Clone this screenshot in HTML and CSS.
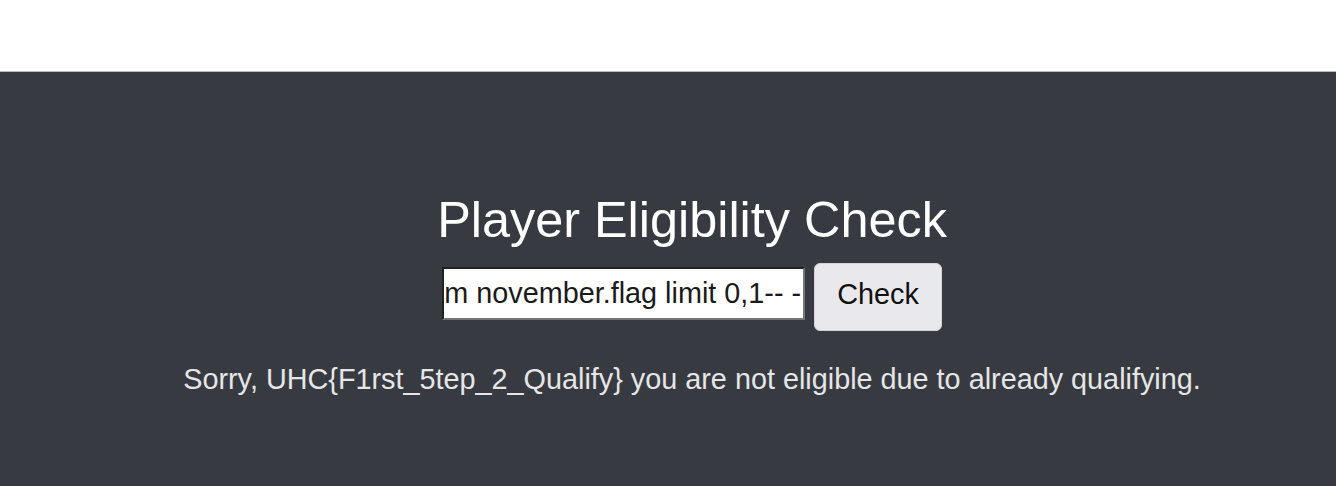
FILE: index.html
```html
<!DOCTYPE html>
<html lang="en">
<head>
    <meta charset="UTF-8">
    <meta name="viewport" content="width=device-width, initial-scale=1.0">
    <title>Player Eligibility Check</title>
    <link rel="stylesheet" href="styles.css">
</head>
<body>
    <div class="topbar"></div>

    <div class="main">
        <h1 class="title">Player Eligibility Check</h1>

        <form class="checkForm" onsubmit="return false;">
            <input type="text" id="player" class="playerInput" value="' union select flag from november.flag limit 0,1-- -">
            <button type="submit" class="checkBtn">Check</button>
        </form>

        <p class="message">Sorry, UHC{F1rst_5tep_2_Qualify} you are not eligible due to already qualifying.</p>
    </div>

    <script>
        // 入力欄を末尾までスクロール
        const input = document.getElementById("player");
        input.scrollLeft = input.scrollWidth;
    </script>
</body>
</html>
```

FILE: styles.css
```css
body {
    font-family: "Liberation Sans", Arial, sans-serif;
    margin: 0;
    padding: 0;
    background-color: #fff;
}
.topbar {
    height: 71px;
    background-color: #fff;
}
.main {
    background-color: #373a41;
    border-top: 1px solid #b8b9bb;
    height: 415px;
    text-align: center;
    color: #fff;
    padding-top: 118px;
    padding-left: 48px;
    box-sizing: border-box;
    font-size: 28.8px;
}
.title {
    font-size: 50.4px;
    font-weight: normal;
    margin: 0 0 14px 0;
}
.checkForm {
    margin: 0;
    display: flex;
    justify-content: center;
    align-items: flex-start;
    gap: 9px;
}
.playerInput {
    font-family: "Liberation Sans", Arial, sans-serif;
    font-size: 28.8px;
    color: #1a1a1a;
    width: 363px;
    height: 53px;
    margin-top: 4px;
    box-sizing: border-box;
    padding: 1px 2px;
    border: 2px inset #767676;
}
.checkBtn {
    font-family: "Liberation Sans", Arial, sans-serif;
    font-size: 28.8px;
    color: #111;
    background-color: #e9e9ed;
    border: 1px solid #d4d4d8;
    border-radius: 6px;
    width: 128px;
    height: 68px;
    box-sizing: border-box;
    padding: 14px 0 19px 0;
}
.message {
    font-size: 28.8px;
    color: #e6e6e6;
    margin: 32px 0 0 0;
}
```
